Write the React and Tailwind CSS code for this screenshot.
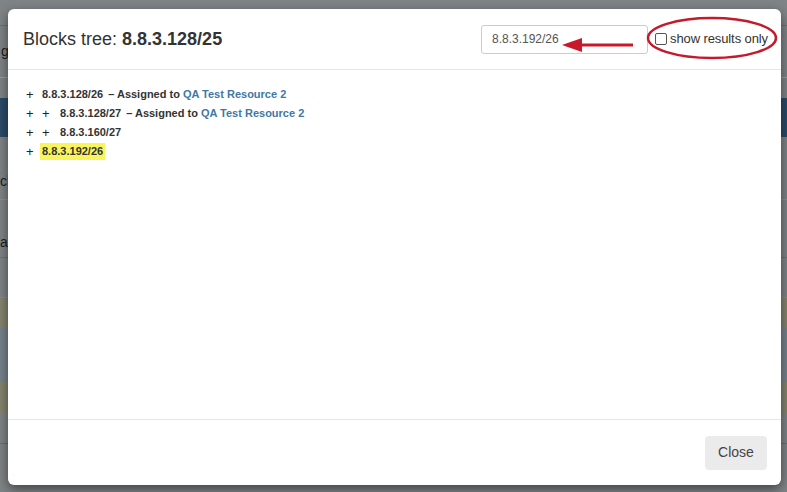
import { useState } from 'react'

const ROWS = [
  { plus: 1, ip: '8.8.3.128/26', owner: 'QA Test Resource 2' },
  { plus: 2, ip: '8.8.3.128/27', owner: 'QA Test Resource 2' },
  { plus: 2, ip: '8.8.3.160/27' },
  { plus: 1, ip: '8.8.3.192/26', hit: true },
]

function Backdrop() {
  // dimmed page that sits behind the dialog
  return (
    <div className="flex flex-col w-full h-[492px] bg-[#7f8486] text-[#1b1b1b] text-[14px]">
      <div className="h-[26px] border-b border-[#6d7173]" />
      <div className="h-[51px] flex items-center pl-px">gi</div>
      <div className="h-[21px] border-t border-[#9a9ea0]" />
      <div className="h-[39px] bg-[#2c4c68]" />
      <div className="h-[26px]" />
      <div className="h-[36px] flex items-center">ck</div>
      <div className="h-[58px] border-t border-[#8c9092] flex items-end pb-[4px]">as</div>
      <div className="h-[40px] border-t border-[#6f7375]" />
      <div className="h-[31px] border-t border-[#8f8e7c] bg-[#85846f]" />
      <div className="h-[54px] bg-[#77828c]" />
      <div className="h-[31px] bg-[#85846f]" />
      <div className="h-[31px] border-b border-[#6c7072]" />
      <div className="flex-1" />
    </div>
  )
}

export default function App() {
  const [resultsOnly, setResultsOnly] = useState(false)

  return (
    <div className="relative w-[787px] h-[492px] overflow-hidden font-['Liberation_Sans',Arial,sans-serif]">
      <Backdrop />

      <div className="absolute left-[8px] top-[9px] w-[773px] h-[476px] bg-white rounded-[6px] shadow-[0_4px_12px_rgba(0,0,0,0.5)] flex flex-col">
        {/* Header */}
        <div className="h-[61px] border-b border-[#e5e5e5] flex items-center pl-[15px] pr-[13px] relative">
          <h4 className="text-[18px] text-[#333] leading-none">
            Blocks tree: <b className="font-bold">8.8.3.128/25</b>
          </h4>
          <div className="ml-auto flex items-center">
            <div className="w-[167px] h-[29px] border border-[#ccc] rounded-[3px] flex items-center pl-[10px] text-[12px] text-[#555]">
              8.8.3.192/26
            </div>
            <label className="flex items-center ml-[7px] text-[13px] text-[#333] gap-[3px] tracking-[-0.1px]">
              <input
                type="checkbox"
                checked={resultsOnly}
                onChange={e => setResultsOnly(e.target.checked)}
                className="w-[12px] h-[12px] m-0 appearance-none border border-[#555] rounded-[2px] bg-white"
              />
              show results only
            </label>
          </div>

          {/* red annotation: arrow + ellipse */}
          <svg className="absolute left-[545px] top-[6px] pointer-events-none" width="230" height="46" viewBox="0 0 230 46">
            <line x1="80" y1="30" x2="26" y2="30" stroke="#c9182b" strokeWidth="3" />
            <path d="M9 30 L29 23 L29 37 Z" fill="#c9182b" />
            <ellipse cx="159" cy="23" rx="64" ry="20" fill="none" stroke="#c41a2c" strokeWidth="2.5" />
          </svg>
        </div>

        {/* Body */}
        <div className="flex-1 pt-[15px] pl-[18px] text-[11px] font-semibold text-[#333]">
          {ROWS.map((r, idx) => (
            <div key={idx} className="h-[19px] flex items-center">
              <span className="w-[16px] text-[13px] font-normal text-[#222]">+</span>
              {r.plus === 2 && <span className="w-[18px] text-[13px] font-normal text-[#222]">+</span>}
              <span className={r.hit ? 'bg-[#f8f55c] px-[2px] -ml-[2px]' : ''}>{r.ip}</span>
              {r.owner && (
                <span className="ml-[5px]">
                  – Assigned to <span className="text-[#3f77a5]">{r.owner}</span>
                </span>
              )}
            </div>
          ))}
        </div>

        {/* Footer */}
        <div className="h-[66px] border-t border-[#e5e5e5] flex items-center justify-end pr-[14px]">
          <button className="w-[62px] h-[34px] bg-[#ebebeb] rounded-[4px] text-[14px] text-[#444]">Close</button>
        </div>
      </div>
    </div>
  )
}
